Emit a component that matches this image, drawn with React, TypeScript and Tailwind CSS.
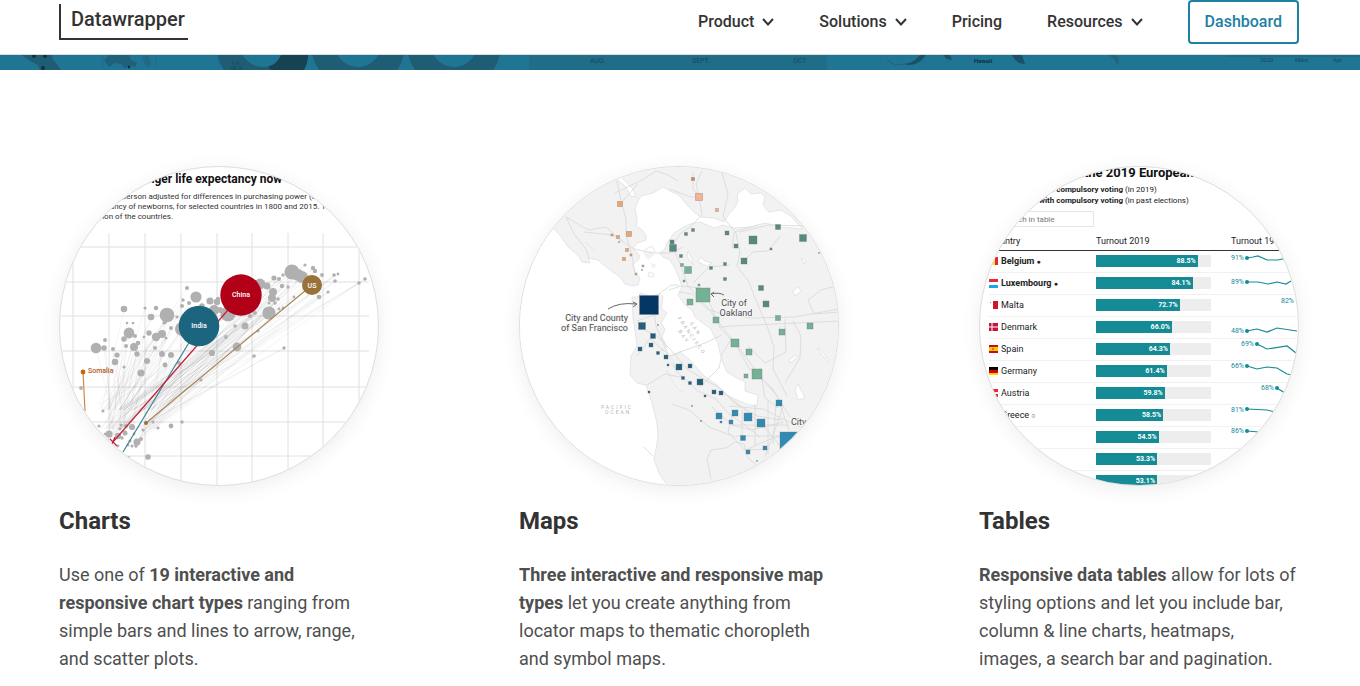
import type { ReactNode } from "react";

type Dot = [x: number, y: number, r: number];
type Point = [x: number, y: number];

const NAV_ITEMS = [
  { label: "Product", menu: true },
  { label: "Solutions", menu: true },
  { label: "Pricing", menu: false },
  { label: "Resources", menu: true },
];

const COUNTRY_DOTS: Dot[] = [
  [128, 122, 2], [137, 131, 5.6], [124, 134, 1.7], [130, 137, 2], [123, 140, 2],
  [143, 140, 2.7], [151, 135, 3.6], [159, 133, 2.2], [65, 143, 3.3], [86, 142, 1.6],
  [97, 142, 2.3], [92, 151, 3.3], [108, 149, 7.3], [105, 157, 1.6], [68, 157, 1.3],
  [74, 157, 1.3], [70, 167, 5.4], [118, 151, 1.6], [112, 162, 2], [65, 173, 2.8],
  [76, 170, 2], [46, 174, 2], [37, 182, 5.3], [45, 182, 2.8], [54, 183, 2],
  [67, 180, 2], [75, 181, 4], [79, 177, 2.3], [78, 188, 2.7], [58, 189, 2.6],
  [56, 196, 3.2], [65, 201, 1.6], [82, 207, 3.6], [88, 195, 3], [85, 171, 1.3],
  [90, 167, 2.7], [97, 171, 4.2], [103, 168, 4], [107, 172, 1.5], [96, 182, 2],
  [103, 188, 3], [112, 189, 3], [106, 199, 2.4], [120, 197, 2], [106, 156, 2],
  [123, 163, 7], [153, 187, 3.1], [142, 214, 1.6], [233, 106, 7.6], [243, 111, 6],
  [239, 109, 6], [246, 99, 1.6], [254, 102, 2.2], [256, 105, 2.2], [263, 109, 1.9],
  [275, 109, 1.8], [279, 108, 1.4], [276, 115, 1.8], [306, 113, 1.8], [300, 117, 1.8],
  [269, 126, 1.6], [260, 131, 2.3], [215, 112, 2.6], [220, 113, 2], [224, 109, 1.7],
  [201, 118, 5.4], [208, 120, 3.5], [214, 126, 4], [223, 120, 2.2], [229, 121, 1.7],
  [213, 132, 4], [219, 133, 1.8], [216, 137, 1.7], [210, 137, 1.5], [235, 131, 1.4],
  [210, 147, 6.6], [220, 143, 1.4], [224, 142, 1.4], [196, 147, 2], [191, 150, 2],
  [186, 160, 3.5], [176, 160, 1.7], [169, 148, 7.6], [158, 136, 3.2], [155, 144, 5],
  [161, 144, 3], [167, 171, 1.9], [178, 181, 4.4], [195, 190, 1.8], [225, 182, 1.7],
  [199, 165, 1.6],
];

const START_DOTS: Dot[] = [
  [94, 256, 1.5], [112, 260, 2.4], [99, 262, 1.6], [123, 256, 1.7], [84, 264, 1.6],
  [89, 291, 2.8], [22, 222, 1.9], [44, 245, 1.6], [40, 260, 1.6], [50, 268, 3.6],
  [59, 270, 3.2], [62, 259, 1.6], [67, 260, 2], [73, 261, 3.1], [61, 263, 1.6],
  [66, 267, 2.5], [71, 275, 1.6], [78, 276, 3.6], [82, 273, 2], [77, 280, 1.8],
  [69, 279, 1.4], [59, 280, 1.4], [63, 272, 1.7], [73, 280, 1.5], [46, 268, 1.3],
  [75, 268, 1.4], [70, 291, 1],
];

const GRID_X = [14, 50, 86, 122, 158, 193, 229, 264, 300];
const GRID_Y = [81, 116, 150, 185, 221, 256, 290];

function ScatterPlot() {
  return (
    <svg viewBox="1 1 318 318" className="block size-full" role="img" aria-label="Scatter plot of income and life expectancy">
      <g stroke="#e0e0e0" strokeWidth="1">
        {GRID_X.map((x) => (
          <path key={x} d={`M${x} 67V320`} />
        ))}
        {GRID_Y.map((y) => (
          <path key={y} d={`M0 ${y}H310`} />
        ))}
      </g>

      <g stroke="#000" strokeOpacity="0.045" strokeWidth="1">
        {COUNTRY_DOTS.map(([x, y], index) => (
          <path
            key={index}
            d={`M${x} ${y}L${24 + ((index * 37) % 36) + x * 0.16} ${244 + ((index * 19) % 38)}`}
          />
        ))}
        {COUNTRY_DOTS.slice(36).map(([x, y], index) => (
          <path
            key={index}
            d={`M${x} ${y}L${38 + ((index * 23) % 64)} ${238 + ((index * 13) % 46)}`}
          />
        ))}
      </g>

      <g fill="#b0b0b0">
        {[...COUNTRY_DOTS, ...START_DOTS].map(([x, y, r], index) => (
          <circle key={index} cx={x} cy={y} r={r} />
        ))}
      </g>

      <g fill="none" strokeWidth="1.2">
        <path d="M253 119L87 257" stroke="#a58557" />
        <path d="M140 160L64 286" stroke="#3f7f95" />
        <path d="M182 129L54 276M51 273l7 7M56 271l-3 7" stroke="#c5203b" />
        <path d="M24 206L26 245" stroke="#d28548" />
      </g>
      <circle cx="87" cy="257" r="2" fill="#99713a" />
      <circle cx="24" cy="206" r="2.4" fill="#c8640e" />
      <circle cx="182" cy="129" r="20.7" fill="#b30019" />
      <circle cx="140" cy="160" r="20.3" fill="#1c657f" />
      <circle cx="253" cy="119" r="10" fill="#99713a" />

      <g fill="#fff" fontSize="7" fontWeight="500" textAnchor="middle">
        <text x="182" y="131">China</text>
        <text x="140" y="162">India</text>
        <text x="253" y="122">US</text>
      </g>
      <text x="29" y="207" fontSize="7" fontWeight="500" fill="#b5571f">
        Somalia
      </text>

      <text x="223" y="17" fontSize="12" fontWeight="700" fill="#111" textAnchor="end">
        Higher income, longer life expectancy now
      </text>
      <g fill="#333" fontSize="8" textAnchor="end">
        <text x="257" y="33">GDP per person adjusted for differences in purchasing power (a</text>
        <text x="267" y="43">life expectancy of newborns, for selected countries in 1800 and 2015. T</text>
        <text x="114" y="53">population of the countries.</text>
      </g>
    </svg>
  );
}

// Symbols are grouped by fill: [center x, center y, side length]
const MAP_SYMBOLS: { fill: string; squares: Dot[] }[] = [
  {
    fill: "#f0a468",
    squares: [
      [101, 38, 5], [110, 68, 5], [93, 69, 2], [99, 71, 3], [108, 84, 3], [112, 89, 2],
      [105, 93, 3], [124, 100, 2], [117, 108, 2],
    ],
  },
  { fill: "#dd7c60", squares: [[174, 13, 3]] },
  { fill: "#f7b28f", squares: [[180, 31, 7], [198, 44, 3]] },
  {
    fill: "#56897f",
    squares: [
      [174, 64, 3], [167, 68, 3], [208, 67, 4], [217, 80, 4], [234, 74, 8], [259, 61, 5],
      [284, 72, 7], [252, 83, 2], [153, 76, 4], [154, 82, 7], [162, 90, 3], [192, 102, 3],
      [206, 98, 3], [225, 95, 6], [206, 113, 3], [242, 122, 5], [247, 138, 6], [300, 87, 1],
      [100, 76, 1], [123, 104, 1],
    ],
  },
  {
    fill: "#74b295",
    squares: [
      [163, 99, 3], [169, 104, 7], [165, 115, 2], [180, 119, 2], [184, 129, 14],
      [171, 136, 6], [197, 154, 6], [259, 152, 5], [291, 160, 6], [263, 166, 6],
      [216, 177, 8], [230, 186, 6], [227, 210, 4], [238, 208, 10],
    ],
  },
  {
    fill: "#215f7f",
    squares: [
      [123, 160, 7], [139, 159, 1], [134, 170, 5], [132, 179, 4], [121, 183, 4],
      [139, 187, 3], [147, 191, 4], [149, 199, 2], [160, 201, 6], [171, 200, 4],
      [164, 212, 3], [171, 217, 3], [181, 216, 6], [195, 226, 4], [202, 227, 4],
      [186, 230, 2], [173, 240, 1], [130, 226, 2], [182, 255, 1],
    ],
  },
  {
    fill: "#2f8bb4",
    squares: [
      [260, 237, 6], [216, 247, 6], [200, 250, 6], [229, 251, 8], [242, 257, 8],
      [212, 256, 4], [202, 256, 2], [224, 272, 5], [246, 282, 4], [229, 286, 4],
      [238, 295, 1], [273, 278, 24],
    ],
  },
  { fill: "#053766", squares: [[130, 139, 19]] },
];

function BayAreaMap() {
  return (
    <svg viewBox="1 1 318 318" className="block size-full" role="img" aria-label="Symbol map of the San Francisco Bay Area">
      <rect width="320" height="320" fill="#f2f2f2" />

      <g fill="#fff" stroke="#dfdfdf" strokeWidth="0.8">
        <path d="M0 28L34 62L41 69L49 81L59 89L63 96L71 97L69 92L79 94L91 104L101 111L106 118L113 120L119 119L121 112L116 106L113 99L119 94L121 90L114 82L118 77L127 74L127 69L123 64L117 60L118 52L116 44L118 37L122 30L134 27L144 21L151 25L160 29L168 39L176 47L182 51L195 52L205 56L210 48L216 41L219 35L218 28L226 22L232 28L242 27L246 31L244 39L250 46L262 44L272 50L279 58L284 63L262 61L246 57L232 61L215 62L204 59L195 62L181 56L171 58L163 62L155 67L151 73L148 77L146 83L141 87L144 91L151 94L156 102L160 112L163 121L159 129L166 139L173 144L176 151L185 158L191 162L199 177L201 187L204 197L208 206L216 211L226 216L226 225L239 229L238 240L230 239L218 234L206 228L198 219L184 209L171 194L161 186L151 191L144 184L148 181L143 171L146 163L142 157L148 147L142 142L144 131L141 128L131 130L121 127L120 131L113 131L114 151L116 164L118 180L112 190L111 209L118 217L127 219L133 237L138 257L139 271L135 294L141 309L149 320H0Z" />
        <path d="M127 83l6-3 3 5-4 4-7-1zM130 106l5 2-1 3-5-1zM274 125l5-4 3 4-6 5zM282 92l5 3-2 3zM276 224l3-6 4 8 3 6-7 2zM270 194l7-5 2 2-8 6zM298 182l5 3 5 7 3 2-1 2-6-6zM181 91l5 4 7 2-5 3-9-4zM169 85l4 8 1 6-6-9zM66 76l10 9M94 10l4-8 4 9 12 12 3 8-5-1-6-10z" />
        <path d="M142 183l8 13 7 8-3-9-7-10zM147 204l12 18 5 4" />
        <path d="M261 165h5v-4h-5z" />
      </g>
      <path d="M124 87l8-2 3 4-6 5zM131 97l7 2-4 4z" fill="#f2f2f2" />

      <g fill="none" stroke="#dadada" strokeWidth="0.9" strokeLinejoin="round">
        <path d="M98 15l4 20 5 18 0 16 5 17 4 20M96 27l27-13 14-9 12 4 10 6M47 51l17 10 6 3 17-3 14 13 14 9 20 4 17 0 12-6M47 51l8 17 12 15 3 9M101 38l18-20M104 75l-11-6-28-3" />
        <path d="M151 23l20 8 9 0 3 18-12 12-10 7-7 11M180 31l-3-13 6-13M203 7l6 21-5 23 13 16 4 20-3 13 12 16 6 16 12 28 7 21-1 22 14 27M221 66l28-7 38 1 33 12M174 6v18l10 7M211 99l-21 2-16 16M213 82l2-16 24-7M226 94l8-8 15-1 12-15M154 82l8 18 7 20 20 22 16 21 18 23 18 24 17 20 12 34" />
        <path d="M150 124l12-4 20 2 10 18 9 22 16 17 13 23 23 20 18 29M160 126l13 2 15 15 15 5 30 4 42-1 45-8M201 161l14-1 41-2 64-3M150 190l36-13 17-8M126 164l12 6 13 13 17 20 18 11 16 9 12 13 24 14 25 4M118 190l13-18 16 15 12 20 20 18 18 8 13 15 16 11 15 12M128 219l18-11 20 4M180 222l20-20 3-14 10-16M229 180l17 17 21-11-1-33M274 155l8 15-1 22-15 25M320 146l-25 2-6-14 13-10 18-5M210 240l34 3 28 14 22 9M193 241l20 18 20 5 32-8M213 249l-4 17 17 18 24-1M223 244v28M236 238v42M249 234v54M217 270h44M212 259h58M227 284l22-10 24-8M257 238l-3 40M264 241l-18 50M202 224l22 18 23 21 16 19M192 313l-4-20 4-9 15-2 9-6 9 2 4 14 12 10M134 290l-9-9M153 238l17 6 20 17 26 10M241 202l5 30 13 10M118 155l20-7M133 130l4 30 12 28M140 128l12-9 8 0" />
      </g>

      {MAP_SYMBOLS.map(({ fill, squares }) => (
        <g key={fill} fill={fill} stroke="#777" strokeOpacity="0.5" strokeWidth="0.7">
          {squares.map(([x, y, side], index) => (
            <rect
              key={index}
              x={x - side / 2}
              y={y - side / 2}
              width={side}
              height={side}
            />
          ))}
        </g>
      ))}

      <g fill="none" stroke="#666" strokeWidth="1">
        <path d="M89 143q11-7 28-5M114 136l4 2-4 3" />
        <path d="M205 129q-5-3-13-1M195 126l-3 2 3 3" />
      </g>
      <g fill="#4c4c4c" stroke="#f7f7f7" strokeWidth="1.5" paintOrder="stroke" fontSize="9">
        <text x="109" y="155" textAnchor="end">City and County</text>
        <text x="109" y="165" textAnchor="end">of San Francisco</text>
        <text x="215" y="140" textAnchor="middle">City of</text>
        <text x="217" y="150" textAnchor="middle">Oakland</text>
        <text x="272" y="259">City of San Jose</text>
      </g>
      <g fill="#b5b5b5" fontSize="5" letterSpacing="2">
        <text x="82" y="243">PACIFIC</text>
        <text x="86" y="248">OCEAN</text>
        <g transform="rotate(55 173 168)">
          <text x="163" y="164">SAN</text>
          <text x="152" y="171">FRANCISCO</text>
          <text x="163" y="178">BAY</text>
        </g>
      </g>
    </svg>
  );
}

const FLAGS: Record<string, ReactNode> = {
  Belgium: (
    <>
      <path d="M0 0h3v8H0z" fill="#222" />
      <path d="M3 0h3v8H3z" fill="#fdda24" />
      <path d="M6 0h3v8H6z" fill="#e0293f" />
    </>
  ),
  Luxembourg: (
    <>
      <path d="M0 0h9v3H0z" fill="#e52a3c" />
      <path d="M0 6h9v3H0z" fill="#1ea5e4" />
    </>
  ),
  Malta: (
    <>
      <path d="M4 0h5v8H4z" fill="#cf142b" />
      <path d="M1 1h1v1H1z" fill="#999" />
    </>
  ),
  Denmark: (
    <>
      <path d="M0 0h9v8H0z" fill="#c8143c" />
      <path d="M3 0v8M0 4h9" stroke="#fff" />
    </>
  ),
  Spain: (
    <>
      <path d="M0 0h9v8H0z" fill="#c60b1e" />
      <path d="M0 2h9v4H0z" fill="#ffc400" />
      <circle cx="4" cy="4" r="1" fill="#ad6a1c" />
    </>
  ),
  Germany: (
    <>
      <path d="M0 0h9v3H0z" fill="#000" />
      <path d="M0 3h9v3H0z" fill="#d00" />
      <path d="M0 6h9v2H0z" fill="#ffce00" />
    </>
  ),
  Austria: (
    <>
      <path d="M0 0h9v3H0z" fill="#e52a3c" />
      <path d="M0 5h9v3H0z" fill="#e52a3c" />
    </>
  ),
};

type TurnoutRow = {
  country?: string;
  mark?: string;
  turnout: number;
  since?: { label: string; x: number; y: number; points: Point[] };
};

const TURNOUT: TurnoutRow[] = [
  { country: "Belgium", mark: "●", turnout: 88.5, since: { label: "91%", x: 0, y: 9, points: [[16, 7], [22, 6], [27, 5], [36, 9], [47, 9], [56, 7]] } },
  { country: "Luxembourg", mark: "●", turnout: 84.1, since: { label: "89%", x: 0, y: 11, points: [[16, 9], [27, 9], [37, 11], [46, 9], [55, 11], [60, 8]] } },
  { country: "Malta", turnout: 72.7, since: { label: "82%", x: 50, y: 8, points: [[67, 6], [77, 8]] } },
  { country: "Denmark", turnout: 66.0, since: { label: "48%", x: 0, y: 16, points: [[16, 14], [26, 12], [36, 15], [46, 11], [66, 14]] } },
  { country: "Spain", turnout: 64.3, since: { label: "69%", x: 10, y: 7, points: [[26, 5], [36, 10], [56, 7], [65, 14]] } },
  { country: "Germany", turnout: 61.4, since: { label: "66%", x: 0, y: 7, points: [[16, 5], [26, 8], [36, 6], [46, 7], [56, 13], [62, 14]] } },
  { country: "Austria", turnout: 59.8, since: { label: "68%", x: 30, y: 7, points: [[46, 5], [54, 10]] } },
  { country: "Greece", mark: "○", turnout: 58.5, since: { label: "81%", x: 0, y: 7, points: [[16, 4], [36, 5], [44, 7]] } },
  { turnout: 54.5, since: { label: "86%", x: 0, y: 6, points: [[16, 4], [28, 5]] } },
  { turnout: 53.3 },
  { turnout: 53.1 },
];

function TurnoutTable() {
  return (
    <div className="w-[400px] pl-[9px] text-[8px] text-[#222]">
      <p className="h-3 text-[13px] leading-3 font-bold whitespace-nowrap text-[#111]">
        Voter turnout in the 2019 European elections
      </p>
      <p className="mt-[5px] leading-[11px]">
        ● = <b>Countries with compulsory voting</b> (in 2019)
      </p>
      <p className="leading-[11px]">
        ○ = <b>Countries with compulsory voting</b> (in past elections)
      </p>
      <input
        type="search"
        aria-label="Search in table"
        placeholder="Search in table"
        className="mt-[5px] block h-4 w-[105px] border border-[#e6e6e6] px-3 text-[8px] placeholder:text-[#777]"
      />

      <table className="mt-[7px] w-full table-fixed border-collapse text-left">
        <thead>
          <tr className="h-4 border-b border-[#333] text-[9px]">
            <th className="w-[107px] p-0 font-normal">Country</th>
            <th className="w-[135px] p-0 font-normal">Turnout 2019</th>
            <th className="p-0 font-normal">Turnout 1979–2019</th>
          </tr>
        </thead>
        <tbody>
          {TURNOUT.map(({ country, mark, turnout, since }) => (
            <tr key={turnout} className="h-[22px] border-b border-[#f1f1f1]">
              <td className="p-0">
                <div className="flex items-center gap-[3px] text-[9px] leading-3">
                  <svg viewBox="0 0 9 9" className="size-[9px]" aria-hidden="true">
                    {country ? FLAGS[country] : null}
                  </svg>
                  <span className={mark === "●" ? "font-bold" : "font-normal"}>
                    {country} <span className="text-[7px]">{mark}</span>
                  </span>
                </div>
              </td>
              <td className="p-0">
                <div className="h-3 w-[115px] bg-[#ededed]">
                  <div
                    className="h-3 bg-[#148b95] pr-0.5 text-right text-[7px] leading-3 font-bold text-white"
                    style={{ width: `${turnout}%` }}
                  >
                    {turnout.toFixed(1)}%
                  </div>
                </div>
              </td>
              <td className="p-0">
                {since ? (
                  <svg viewBox="0 0 80 20" className="block h-5 w-20 text-[#148b95]">
                    <text x={since.x} y={since.y} fontSize="7" fill="currentColor">
                      {since.label}
                    </text>
                    <polyline
                      points={since.points.map((point) => point.join(",")).join(" ")}
                      fill="none"
                      stroke="currentColor"
                      strokeWidth="1.2"
                    />
                    <circle cx={since.points[0][0]} cy={since.points[0][1]} r="2" fill="currentColor" />
                  </svg>
                ) : null}
              </td>
            </tr>
          ))}
        </tbody>
      </table>
    </div>
  );
}

function HeroStrip() {
  return (
    <svg
      viewBox="0 0 1360 15"
      preserveAspectRatio="xMidYMax slice"
      className="block h-[15px] w-full bg-[#217594]"
      aria-hidden="true"
    >
      <path d="M529 0h298v15H529z" fill="#206d8a" />
      <g fill="#1f5d74">
        <path d="M22 0h30l1 5 4 4 4 6H40l-2-5-8-4z" />
        <path d="M104 5l5-5h20l2 5 6 3-2 4-7-2-3 4-4-5-6-1-6 4z" opacity="0.8" />
        <path d="M142 2l6-2 3 7-2 6-5-5z" opacity="0.5" />
      </g>
      <g fill="#12303c">
        <circle cx="34" cy="1" r="2" />
        <circle cx="45" cy="1" r="2" />
        <circle cx="43" cy="13" r="2" />
        <circle cx="129" cy="12" r="1.4" />
      </g>
      <path d="M104 0q-3 8 0 15M155 0q3 8 0 15" fill="none" stroke="#1f6c89" />

      <g fill="none" stroke="#1f5d74" strokeWidth="24">
        <circle cx="263" cy="-11" r="35" />
        <circle cx="358" cy="-11" r="35" />
        <circle cx="454" cy="-11" r="35" />
      </g>
      <path d="M268 12q9-3 13-12h27q0 8-4 15h-33z" fill="#164252" />

      <g fill="#15475a" fontSize="6">
        <g fontSize="7">
          <text x="590" y="8">AUG.</text>
          <text x="692" y="8">SEPT.</text>
          <text x="793" y="8">OCT.</text>
        </g>
        <text x="1260" y="7">2020</text>
        <text x="1295" y="7">März</text>
        <text x="1333" y="7">Apr</text>
        <text x="231" y="10">1.9</text>
        <text x="230" y="15">26.%</text>
        <text x="974" y="8" fill="#10303d" fontWeight="700">Hawaii</text>
      </g>
      <path d="M904 9q8-1 12-5l4-4h6l-4 5q-6 5-14 5zM943 0h7l2 5-5-1zM1012 0h10l3 9q-9 0-13-9z" fill="#1a5166" />
      <path d="M1108 0h8l3 3-1 7-5-7z" fill="#1f6580" />
      <path d="M887 5l8 5 10-1M1226 1h134" fill="none" stroke="#1c637e" />
    </svg>
  );
}

function ChevronDown() {
  return (
    <svg viewBox="0 0 12 8" className="h-2 w-3" fill="none" stroke="currentColor" strokeWidth="2" aria-hidden="true">
      <path d="M1 1l5 5.5L11 1" />
    </svg>
  );
}

function Header() {
  return (
    <header className="flex h-[55px] items-start justify-between border-b border-[#dcdcdc] bg-white pr-[61px] pl-[59px] text-[#333]">
      <a
        href="#"
        className="mt-1 flex h-9 w-[129px] border-b-2 border-l-2 border-[#333] pl-2.5 text-[20px] leading-[30px] font-medium"
      >
        Datawrapper
      </a>

      <nav className="flex items-center gap-[45px] text-base font-medium">
        {NAV_ITEMS.map(({ label, menu }) =>
          menu ? (
            <button key={label} type="button" className="flex items-center gap-2">
              {label}
              <ChevronDown />
            </button>
          ) : (
            <a key={label} href="#">
              {label}
            </a>
          )
        )}
        <a
          href="#"
          className="flex h-11 items-center rounded-[4px] border-2 border-[#1d81a2] px-[15px] text-[#1d81a2]"
        >
          Dashboard
        </a>
      </nav>
    </header>
  );
}

type FeatureProps = {
  title: string;
  picture: ReactNode;
  children: ReactNode;
};

function Feature({ title, picture, children }: FeatureProps) {
  return (
    <section>
      <div className="aspect-square w-full overflow-hidden rounded-full border border-[#dedede] bg-white shadow-[0_4px_20px_rgba(0,0,0,0.07)]">
        {picture}
      </div>
      <h2 className="mt-[19px] text-2xl leading-8 font-bold text-[#333]">{title}</h2>
      <p className="mt-6 text-lg leading-7 text-[#4f4f4f]">{children}</p>
    </section>
  );
}

export default function App() {
  return (
    <div className="bg-white font-['Roboto',sans-serif]">
      <Header />
      <HeroStrip />

      <main className="grid grid-cols-3 gap-[140px] pt-24 pr-[61px] pl-[59px]">
        <Feature title="Charts" picture={<ScatterPlot />}>
          Use one of <b>19 interactive and responsive chart types</b> ranging from
          simple bars and lines to arrow, range, and scatter plots.
        </Feature>
        <Feature title="Maps" picture={<BayAreaMap />}>
          <b>Three interactive and responsive map types</b> let you create anything
          from locator maps to thematic choropleth and symbol maps.
        </Feature>
        <Feature title="Tables" picture={<TurnoutTable />}>
          <b>Responsive data tables</b> allow for lots of styling options and let you
          include bar, column &amp; line charts, heatmaps, images, a search bar and
          pagination.
        </Feature>
      </main>
    </div>
  );
}
